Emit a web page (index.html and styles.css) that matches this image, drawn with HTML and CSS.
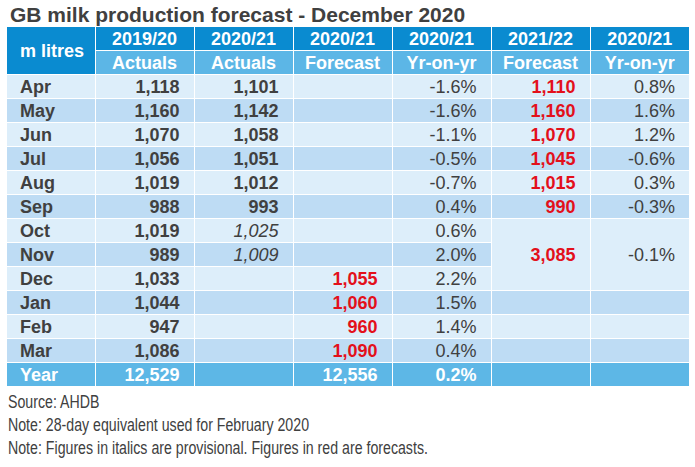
FILE: index.html
```html
<!DOCTYPE html>
<html lang="en">
<head>
<meta charset="utf-8">
<title>GB milk production forecast</title>
<link rel="stylesheet" href="styles.css">
</head>
<body>
<div class="page">
  <h1 class="title">GB milk production forecast - December 2020</h1>
  <table class="milk">
    <colgroup>
      <col class="c-month"><col class="c-num"><col class="c-num"><col class="c-num"><col class="c-num"><col class="c-num"><col class="c-num">
    </colgroup>
    <thead>
      <tr class="h1">
        <th rowspan="2" class="unit">m litres</th>
        <th>2019/20</th><th>2020/21</th><th>2020/21</th><th>2020/21</th><th>2021/22</th><th>2020/21</th>
      </tr>
      <tr class="h2">
        <th>Actuals</th><th>Actuals</th><th>Forecast</th><th>Yr-on-yr</th><th>Forecast</th><th>Yr-on-yr</th>
      </tr>
    </thead>
    <tbody>
      <tr class="lt"><td class="m">Apr</td><td class="b">1,118</td><td class="b">1,101</td><td></td><td>-1.6%</td><td class="r">1,110</td><td>0.8%</td></tr>
      <tr class="dk"><td class="m">May</td><td class="b">1,160</td><td class="b">1,142</td><td></td><td>-1.6%</td><td class="r">1,160</td><td>1.6%</td></tr>
      <tr class="lt"><td class="m">Jun</td><td class="b">1,070</td><td class="b">1,058</td><td></td><td>-1.1%</td><td class="r">1,070</td><td>1.2%</td></tr>
      <tr class="dk"><td class="m">Jul</td><td class="b">1,056</td><td class="b">1,051</td><td></td><td>-0.5%</td><td class="r">1,045</td><td>-0.6%</td></tr>
      <tr class="lt"><td class="m">Aug</td><td class="b">1,019</td><td class="b">1,012</td><td></td><td>-0.7%</td><td class="r">1,015</td><td>0.3%</td></tr>
      <tr class="dk"><td class="m">Sep</td><td class="b">988</td><td class="b">993</td><td></td><td>0.4%</td><td class="r">990</td><td>-0.3%</td></tr>
      <tr class="lt"><td class="m">Oct</td><td class="b">1,019</td><td class="i">1,025</td><td></td><td>0.6%</td><td rowspan="3" class="r merged">3,085</td><td rowspan="3" class="merged">-0.1%</td></tr>
      <tr class="dk"><td class="m">Nov</td><td class="b">989</td><td class="i">1,009</td><td></td><td>2.0%</td></tr>
      <tr class="lt"><td class="m">Dec</td><td class="b">1,033</td><td></td><td class="r">1,055</td><td>2.2%</td></tr>
      <tr class="dk"><td class="m">Jan</td><td class="b">1,044</td><td></td><td class="r">1,060</td><td>1.5%</td><td></td><td></td></tr>
      <tr class="lt"><td class="m">Feb</td><td class="b">947</td><td></td><td class="r">960</td><td>1.4%</td><td></td><td></td></tr>
      <tr class="dk"><td class="m">Mar</td><td class="b">1,086</td><td></td><td class="r">1,090</td><td>0.4%</td><td></td><td></td></tr>
      <tr class="year"><td class="m">Year</td><td>12,529</td><td></td><td>12,556</td><td>0.2%</td><td></td><td></td></tr>
    </tbody>
  </table>
  <div class="notes">
    <p>Source: AHDB</p>
    <p>Note: 28-day equivalent used for February 2020</p>
    <p>Note: Figures in italics are provisional. Figures in red are forecasts.</p>
  </div>
</div>
</body>
</html>
```
FILE: styles.css
```css
html, body {
  margin: 0;
  padding: 0;
  background: #ffffff;
}

.page {
  padding: 0 6px 0 7px;
  font-family: "Liberation Sans", Arial, sans-serif;
  color: #404040;
}

.title {
  margin: 0;
  padding: 3px 0 0 3px;
  height: 27px;
  box-sizing: border-box;
  font-size: 21px;
  line-height: 24px;
  font-weight: bold;
  color: #404040;
}

.milk {
  border-collapse: collapse;
  table-layout: fixed;
  width: 682px;
  font-size: 18px;
}

.c-month { width: 88px; }
.c-num { width: 99px; }

.milk th,
.milk td {
  height: 23px;
  padding: 0 14px 0 0;
  border: 1px solid #ffffff;
  line-height: 20px;
  text-align: right;
  white-space: nowrap;
  overflow: hidden;
}

.milk tr:first-child th { border-top: 0; }
.milk th:first-child, .milk td:first-child { border-left: 0; }
.milk th:last-child, .milk td:last-child { border-right: 0; }

.milk th {
  color: #ffffff;
  font-weight: bold;
  text-align: center;
  padding: 0;
}

.h1 th { background: #0a8bd0; }
.h2 th { background: #5cb6e6; }

.milk th.unit {
  background: #0a8bd0;
  text-align: left;
  padding-left: 13px;
}

.lt td { background: #ddeefa; }
.dk td { background: #bedcf4; }
.milk td.merged { background: #ddeefa; }

.milk td.m {
  text-align: left;
  padding-left: 13px;
  font-weight: bold;
}

.milk td.b { font-weight: bold; }
.milk td.i { font-style: italic; }
.milk td.r { color: #e3101b; font-weight: bold; }

.year td {
  background: #5db7e6;
  color: #ffffff;
  font-weight: bold;
}

.notes {
  padding: 4px 0 0 1px;
  font-size: 17.5px;
  line-height: 23px;
  color: #404040;
}

.notes p {
  margin: 0;
  white-space: nowrap;
  transform: scaleX(0.81);
  transform-origin: left center;
}
```
